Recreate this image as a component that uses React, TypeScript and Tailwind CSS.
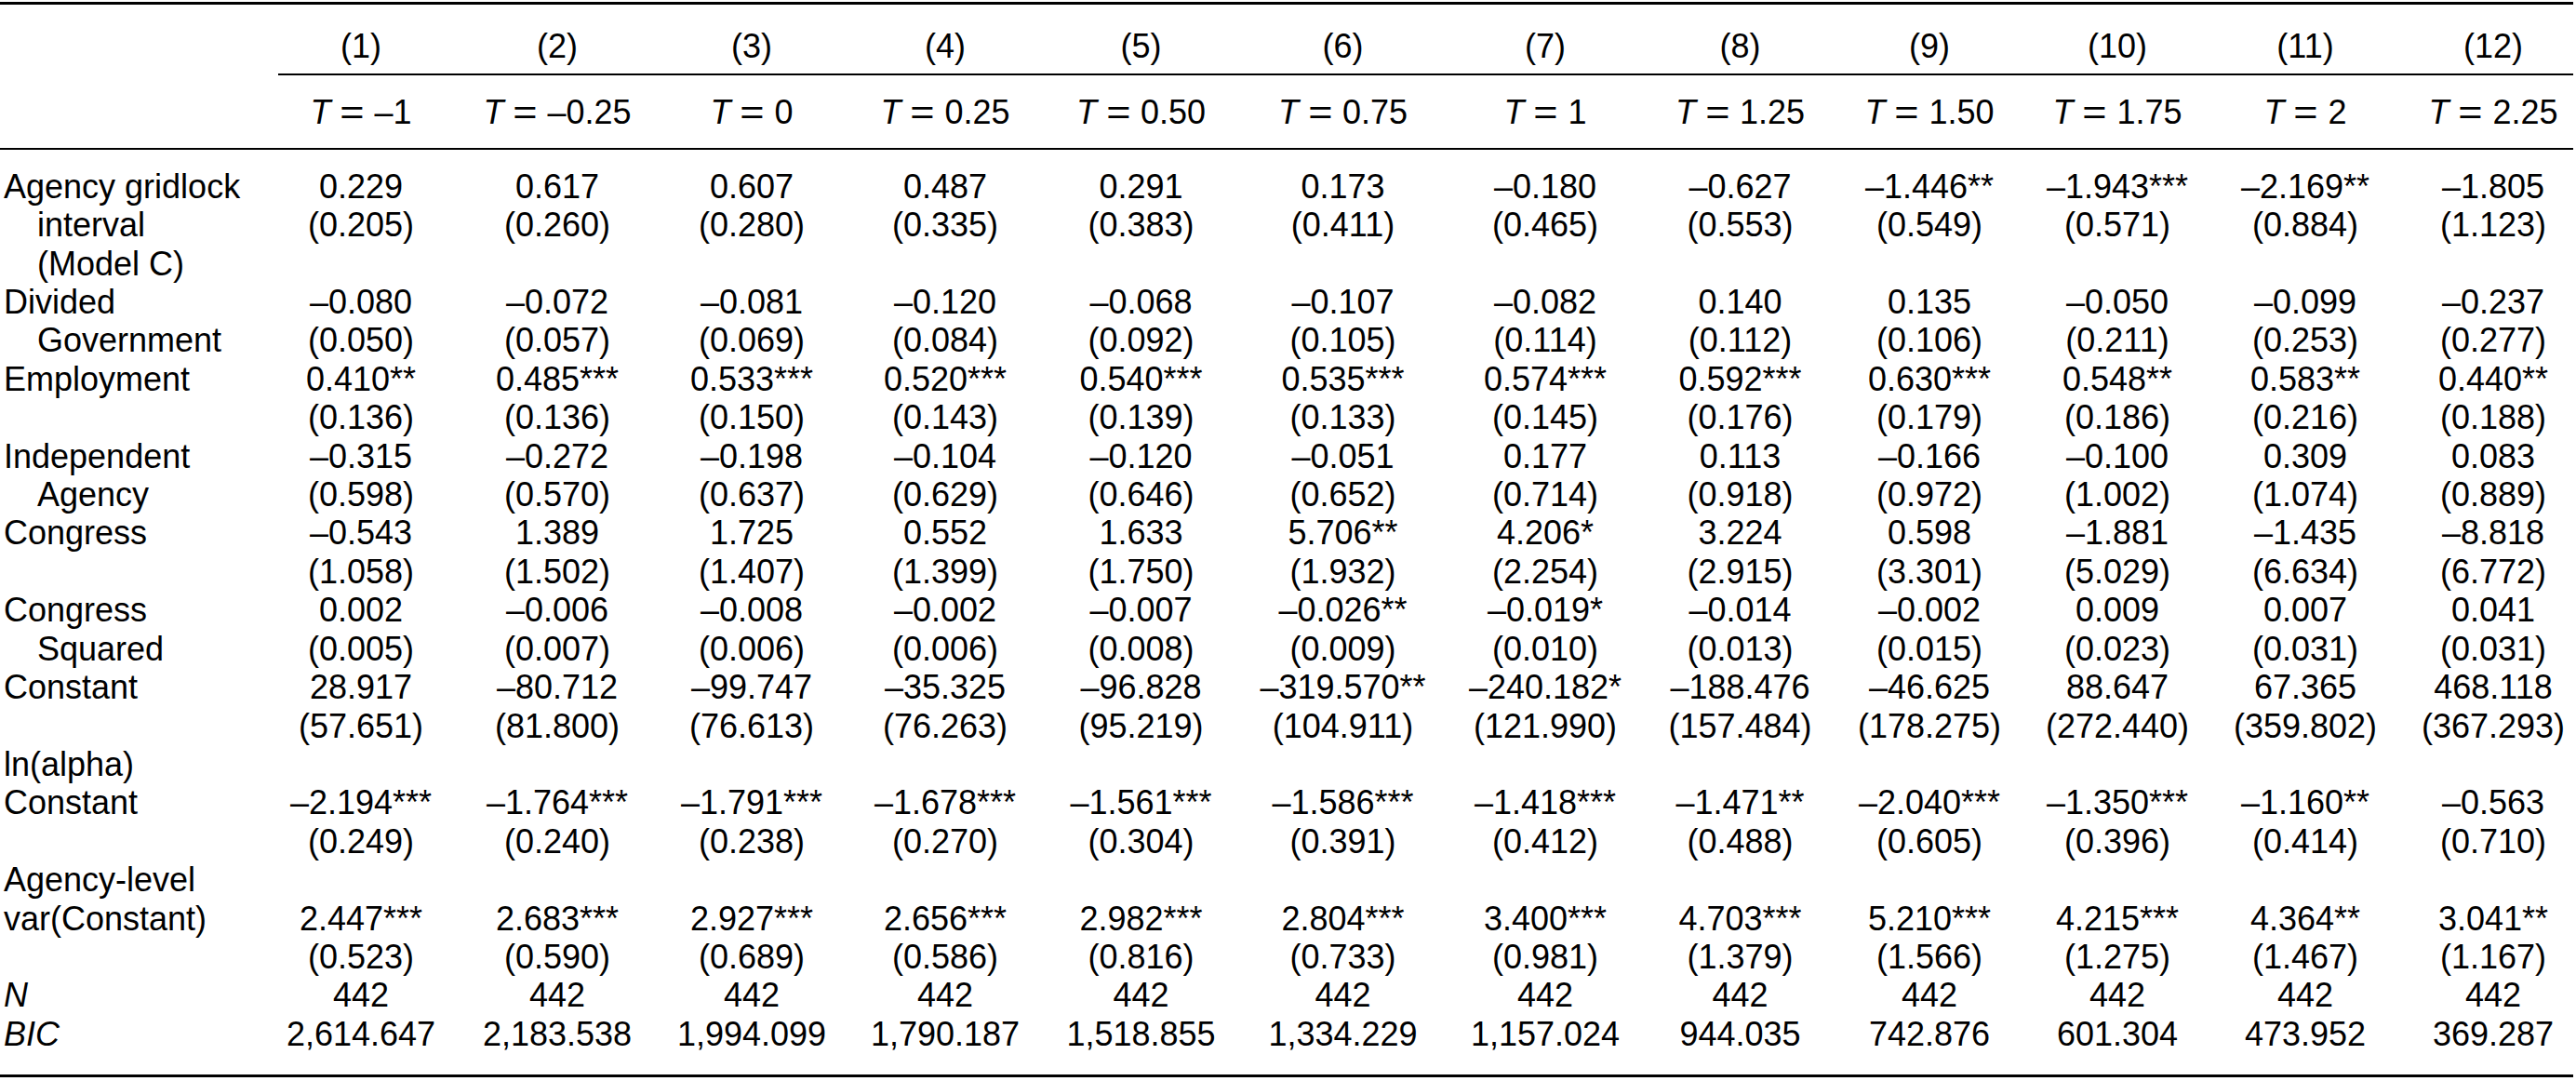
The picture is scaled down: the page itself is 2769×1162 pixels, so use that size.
import React from 'react';

// Regression table: 12 models, T = -1 .. 2.25
const COLS =
  'grid grid-cols-[282px_212px_210px_208px_208px_213px_221px_214px_205px_202px_202px_202px_190px]';

type Row = {
  label: string;
  indent?: boolean;
  italic?: boolean;
  values?: string[];
};

const rows: Row[] = [
  {
    label: 'Agency gridlock',
    values: ['0.229', '0.617', '0.607', '0.487', '0.291', '0.173', '–0.180', '–0.627', '–1.446**', '–1.943***', '–2.169**', '–1.805'],
  },
  {
    label: 'interval',
    indent: true,
    values: ['(0.205)', '(0.260)', '(0.280)', '(0.335)', '(0.383)', '(0.411)', '(0.465)', '(0.553)', '(0.549)', '(0.571)', '(0.884)', '(1.123)'],
  },
  { label: '(Model C)', indent: true },
  {
    label: 'Divided',
    values: ['–0.080', '–0.072', '–0.081', '–0.120', '–0.068', '–0.107', '–0.082', '0.140', '0.135', '–0.050', '–0.099', '–0.237'],
  },
  {
    label: 'Government',
    indent: true,
    values: ['(0.050)', '(0.057)', '(0.069)', '(0.084)', '(0.092)', '(0.105)', '(0.114)', '(0.112)', '(0.106)', '(0.211)', '(0.253)', '(0.277)'],
  },
  {
    label: 'Employment',
    values: ['0.410**', '0.485***', '0.533***', '0.520***', '0.540***', '0.535***', '0.574***', '0.592***', '0.630***', '0.548**', '0.583**', '0.440**'],
  },
  {
    label: '',
    values: ['(0.136)', '(0.136)', '(0.150)', '(0.143)', '(0.139)', '(0.133)', '(0.145)', '(0.176)', '(0.179)', '(0.186)', '(0.216)', '(0.188)'],
  },
  {
    label: 'Independent',
    values: ['–0.315', '–0.272', '–0.198', '–0.104', '–0.120', '–0.051', '0.177', '0.113', '–0.166', '–0.100', '0.309', '0.083'],
  },
  {
    label: 'Agency',
    indent: true,
    values: ['(0.598)', '(0.570)', '(0.637)', '(0.629)', '(0.646)', '(0.652)', '(0.714)', '(0.918)', '(0.972)', '(1.002)', '(1.074)', '(0.889)'],
  },
  {
    label: 'Congress',
    values: ['–0.543', '1.389', '1.725', '0.552', '1.633', '5.706**', '4.206*', '3.224', '0.598', '–1.881', '–1.435', '–8.818'],
  },
  {
    label: '',
    values: ['(1.058)', '(1.502)', '(1.407)', '(1.399)', '(1.750)', '(1.932)', '(2.254)', '(2.915)', '(3.301)', '(5.029)', '(6.634)', '(6.772)'],
  },
  {
    label: 'Congress',
    values: ['0.002', '–0.006', '–0.008', '–0.002', '–0.007', '–0.026**', '–0.019*', '–0.014', '–0.002', '0.009', '0.007', '0.041'],
  },
  {
    label: 'Squared',
    indent: true,
    values: ['(0.005)', '(0.007)', '(0.006)', '(0.006)', '(0.008)', '(0.009)', '(0.010)', '(0.013)', '(0.015)', '(0.023)', '(0.031)', '(0.031)'],
  },
  {
    label: 'Constant',
    values: ['28.917', '–80.712', '–99.747', '–35.325', '–96.828', '–319.570**', '–240.182*', '–188.476', '–46.625', '88.647', '67.365', '468.118'],
  },
  {
    label: '',
    values: ['(57.651)', '(81.800)', '(76.613)', '(76.263)', '(95.219)', '(104.911)', '(121.990)', '(157.484)', '(178.275)', '(272.440)', '(359.802)', '(367.293)'],
  },
  { label: 'ln(alpha)' },
  {
    label: 'Constant',
    values: ['–2.194***', '–1.764***', '–1.791***', '–1.678***', '–1.561***', '–1.586***', '–1.418***', '–1.471**', '–2.040***', '–1.350***', '–1.160**', '–0.563'],
  },
  {
    label: '',
    values: ['(0.249)', '(0.240)', '(0.238)', '(0.270)', '(0.304)', '(0.391)', '(0.412)', '(0.488)', '(0.605)', '(0.396)', '(0.414)', '(0.710)'],
  },
  { label: 'Agency-level' },
  {
    label: 'var(Constant)',
    values: ['2.447***', '2.683***', '2.927***', '2.656***', '2.982***', '2.804***', '3.400***', '4.703***', '5.210***', '4.215***', '4.364**', '3.041**'],
  },
  {
    label: '',
    values: ['(0.523)', '(0.590)', '(0.689)', '(0.586)', '(0.816)', '(0.733)', '(0.981)', '(1.379)', '(1.566)', '(1.275)', '(1.467)', '(1.167)'],
  },
  { label: 'N', italic: true, values: Array(12).fill('442') },
  {
    label: 'BIC',
    italic: true,
    values: ['2,614.647', '2,183.538', '1,994.099', '1,790.187', '1,518.855', '1,334.229', '1,157.024', '944.035', '742.876', '601.304', '473.952', '369.287'],
  },
];

const tValues = ['–1', '–0.25', '0', '0.25', '0.50', '0.75', '1', '1.25', '1.50', '1.75', '2', '2.25'];

function Cell({ i, children }: { i: number; children?: React.ReactNode }) {
  // last column is narrower, nudge its centre to the right
  return (
    <div className={`text-center whitespace-nowrap ${i === 11 ? 'pl-[12px]' : ''}`}>{children}</div>
  );
}

export default function App() {
  return (
    <div className="w-[2769px] h-[1162px] bg-white text-black font-['Liberation_Sans',Arial,sans-serif] text-[36px] leading-[41.4px]">
      <div className="pt-[2px]">
        <div className="h-[3px] w-[2766px] bg-black" />
      </div>

      {/* model numbers */}
      <div className={`${COLS} mt-[24px]`}>
        <div />
        {tValues.map((_, i) => (
          <Cell key={i} i={i}>
            ({i + 1})
          </Cell>
        ))}
      </div>

      <div className="mt-[9px] ml-[299px] h-[2px] w-[2467px] bg-black" />

      {/* threshold values */}
      <div className={`${COLS} mt-[19px]`}>
        <div />
        {tValues.map((t, i) => (
          <Cell key={i} i={i}>
            <span className="italic">T</span>
            <span className="inline-block mx-[13px] scale-x-125 font-light">=</span>
            {t}
          </Cell>
        ))}
      </div>

      <div className="mt-[17px] h-[2px] w-[2766px] bg-black" />

      {/* body */}
      <div className="mt-[19px]">
        {rows.map((row, r) => (
          <div key={r} className={COLS}>
            <div className={`whitespace-nowrap ${row.indent ? 'pl-[40px]' : 'pl-[4px]'} ${row.italic ? 'italic' : ''}`}>
              {row.label}
            </div>
            {Array.from({ length: 12 }).map((_, i) => (
              <Cell key={i} i={i}>
                {row.values ? row.values[i] : ''}
              </Cell>
            ))}
          </div>
        ))}
      </div>

      <div className="mt-[23px] h-[3px] w-[2766px] bg-black" />
    </div>
  );
}
